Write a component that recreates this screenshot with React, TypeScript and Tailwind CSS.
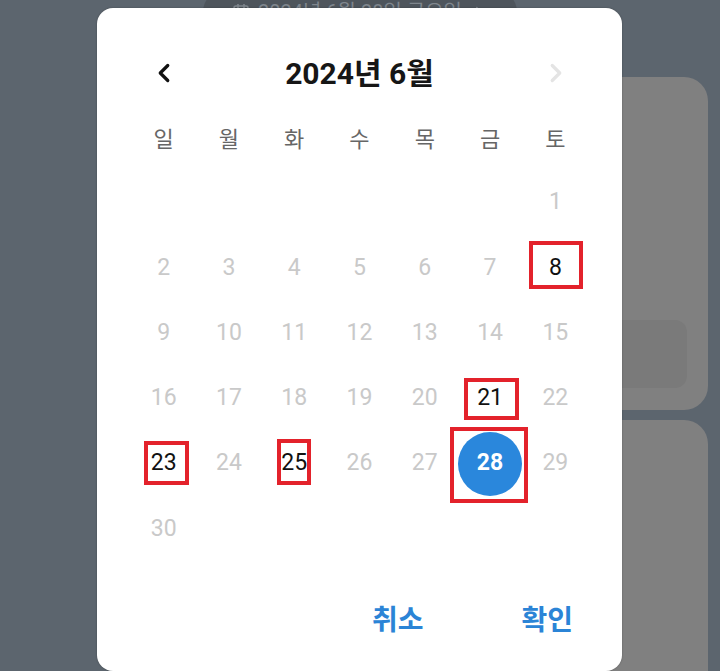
import { ChevronLeft, ChevronRight } from 'lucide-react'

const WEEKDAYS = ['일', '월', '화', '수', '목', '금', '토']
const ENABLED = [8, 21, 23, 25, 28]
const SELECTED = 28

// 2024년 6월: 1일이 토요일
const cells: (number | null)[] = [
  ...Array(6).fill(null),
  ...Array.from({ length: 30 }, (_, i) => i + 1),
]
while (cells.length < 42) cells.push(null)

// red annotation boxes drawn over the screenshot
const MARKS = [
  { key: 8, cls: 'left-[529px] top-[241px] w-[54px] h-[48px]' },
  { key: 21, cls: 'left-[464px] top-[378px] w-[55px] h-[42px]' },
  { key: 28, cls: 'left-[450px] top-[427px] w-[78px] h-[76px]' },
  { key: 23, cls: 'left-[144px] top-[441px] w-[45px] h-[44px]' },
  { key: 25, cls: 'left-[277px] top-[439px] w-[34px] h-[46px]' },
]

export default function App() {
  return (
    <div className="relative w-[720px] h-[671px] overflow-hidden bg-[#5c656e] font-['Roboto','Noto_Sans_CJK_KR',sans-serif]">
      {/* Page behind the dim */}
      <div className="flex flex-col">
        <div className="flex justify-center -mt-[10px]">
          <div className="w-[314px] h-[44px] rounded-full bg-[#4e555c] flex items-center justify-center gap-2 text-[20px] text-[#7f868d]">
            <svg width="18" height="18" viewBox="0 0 18 18" fill="none" stroke="currentColor" strokeWidth="1.6">
              <rect x="2" y="3" width="14" height="13" rx="2" />
              <path d="M2 7h14M6 1v4M12 1v4" />
            </svg>
            <span>2024년 6월 28일 금요일</span>
            <ChevronRight size={18} />
          </div>
        </div>
        <div className="flex flex-col items-end pr-[12px] mt-[43px] gap-[10px]">
          <div className="w-[340px] h-[333px] rounded-[24px] bg-[#808080] flex flex-col justify-end pb-[22px] pr-[21px] items-end">
            <div className="w-[300px] h-[68px] rounded-[12px] bg-[#7a7a7a]" />
          </div>
          <div className="w-[340px] h-[300px] rounded-[24px] bg-[#808080]" />
        </div>
      </div>

      {/* Date picker dialog */}
      <div className="absolute left-[97px] top-[8px] w-[525px] h-[663px] rounded-[16px] bg-white flex flex-col px-[34px] shadow-[0_0_2px_rgba(0,0,0,0.3)]">
        <div className="mt-[41px] h-[48px] flex items-center justify-between">
          <div className="w-[65px] flex justify-center text-[#111]">
            <ChevronLeft size={30} strokeWidth={2.6} />
          </div>
          <h1 className="text-[30px] font-bold text-[#161616]">2024년 6월</h1>
          <div className="w-[65px] flex justify-center text-[#e4e4e4]">
            <ChevronRight size={30} strokeWidth={2.6} />
          </div>
        </div>

        <div className="mt-[8px] grid grid-cols-7">
          {WEEKDAYS.map(d => (
            <div key={d} className="h-[65px] flex items-center justify-center text-[22px] text-[#666] font-['Noto_Sans_CJK_KR',sans-serif]">
              {d}
            </div>
          ))}
          {cells.map((n, i) => (
            <div key={i} className="h-[65.25px] flex items-center justify-center">
              {n === SELECTED ? (
                <div className="w-[64px] h-[64px] rounded-full bg-[#2a87dc] flex items-center justify-center text-white font-bold text-[23px]">
                  {n}
                </div>
              ) : n ? (
                <span className={`text-[23px] ${ENABLED.includes(n) ? 'text-[#111]' : 'text-[#c9c9c9]'}`}>{n}</span>
              ) : null}
            </div>
          ))}
        </div>

        <div className="mt-auto pb-[37px] flex justify-end gap-[98px] pr-[15px] font-['Noto_Sans_CJK_KR',sans-serif]">
          <button className="text-[28px] leading-[32px] font-bold text-[#2b84d6]">취소</button>
          <button className="text-[28px] leading-[32px] font-bold text-[#2b84d6]">확인</button>
        </div>
      </div>

      {MARKS.map(m => (
        <div key={m.key} className={`absolute border-[4px] border-[#e3222b] ${m.cls}`} />
      ))}
    </div>
  )
}
